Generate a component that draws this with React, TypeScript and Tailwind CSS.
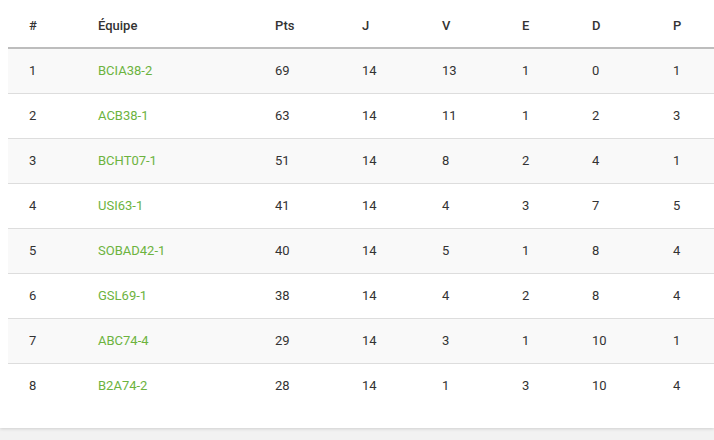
const rows = [
  { rank: 1, team: "BCIA38-2", pts: 69, j: 14, v: 13, e: 1, d: 0, p: 1 },
  { rank: 2, team: "ACB38-1", pts: 63, j: 14, v: 11, e: 1, d: 2, p: 3 },
  { rank: 3, team: "BCHT07-1", pts: 51, j: 14, v: 8, e: 2, d: 4, p: 1 },
  { rank: 4, team: "USI63-1", pts: 41, j: 14, v: 4, e: 3, d: 7, p: 5 },
  { rank: 5, team: "SOBAD42-1", pts: 40, j: 14, v: 5, e: 1, d: 8, p: 4 },
  { rank: 6, team: "GSL69-1", pts: 38, j: 14, v: 4, e: 2, d: 8, p: 4 },
  { rank: 7, team: "ABC74-4", pts: 29, j: 14, v: 3, e: 1, d: 10, p: 1 },
  { rank: 8, team: "B2A74-2", pts: 28, j: 14, v: 1, e: 3, d: 10, p: 4 },
];

const headers = ["#", "Équipe", "Pts", "J", "V", "E", "D", "P"];
const widths = ["w-[69px]", "w-[177px]", "w-[87px]", "w-[80px]", "w-[80px]", "w-[70px]", "w-[81px]", "w-[62px]"];

export default function App() {
  return (
    <div className="min-h-[440px] bg-[#f2f2f2] font-['Roboto',sans-serif] text-[13px] text-[#333]">
      <div className="bg-white pl-2 pb-5 shadow-[0_1px_3px_rgba(0,0,0,0.15)]">
        <table className="w-[706px] table-fixed border-collapse">
          <colgroup>
            {widths.map((w, i) => (
              <col key={i} className={w} />
            ))}
          </colgroup>
          <thead>
            <tr className="h-12 border-b-2 border-[#bdbdbd]">
              {headers.map((h) => (
                <th key={h} className="pl-[21px] pt-1 text-left font-medium text-[#333]">
                  {h}
                </th>
              ))}
            </tr>
          </thead>
          <tbody>
            {rows.map((r, i) => (
              <tr
                key={r.rank}
                className={`h-[45px] ${i % 2 === 0 ? "bg-[#f9f9f9]" : "bg-white"} ${
                  i < rows.length - 1 ? "border-b border-[#dddddd]" : ""
                }`}
              >
                <td className="pl-[21px]">{r.rank}</td>
                <td className="pl-[21px] text-[#6cb33e]">{r.team}</td>
                <td className="pl-[21px]">{r.pts}</td>
                <td className="pl-[21px]">{r.j}</td>
                <td className="pl-[21px]">{r.v}</td>
                <td className="pl-[21px]">{r.e}</td>
                <td className="pl-[21px]">{r.d}</td>
                <td className="pl-[21px]">{r.p}</td>
              </tr>
            ))}
          </tbody>
        </table>
      </div>
    </div>
  );
}
